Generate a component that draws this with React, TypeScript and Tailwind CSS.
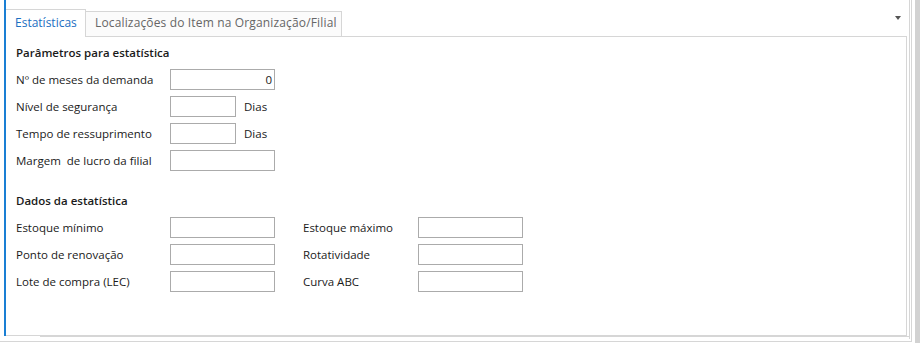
import React from "react";

const Field = ({ w = "w-[105px]", value }: { w?: string; value?: string }) => (
  <div className={`${w} h-[21px] border border-[#ababab] bg-white flex items-center justify-end pr-[2px] text-[#1a1a1a]`}>
    {value}
  </div>
);

const Row = ({ label, children }: { label: string; children: React.ReactNode }) => (
  <div className="flex items-center h-[21px]">
    <div className="w-[154px] whitespace-pre">{label}</div>
    {children}
  </div>
);

export default function App() {
  return (
    <div className="flex h-[343px] w-[920px] bg-white text-[11.5px] leading-[16px] text-[#1a1a1a] font-['Open_Sans',sans-serif] overflow-hidden">
      <div className="w-[915px] h-full">
        <div className="w-[912px] h-[342px] border-r border-b border-[#d6d6d6]">
          <div className="w-[910px] h-[339px] border-r border-[#d6d6d6] flex flex-col">
            <div className="h-[336px] flex">
              <div className="w-[4px]" />
              <div className="w-[2px] h-full bg-[#1a7fd4]" />
              <div className="w-[901px] h-full flex flex-col">
                {/* tab header */}
                <div className="h-[37px] flex items-end">
                  <div className="w-[80px] h-[28px] border-t border-r border-[#d6d6d6] bg-white pl-[9px] pt-[5px] text-[12px] text-[#1d6fc2]">
                    Estatísticas
                  </div>
                  <div className="w-[256px] h-[26px] border-t border-r border-b border-[#d6d6d6] bg-[#fbfbfb] pl-[9px] pt-[3px] text-[12px] tracking-[0.15px] text-[#666666] whitespace-nowrap">
                    Localizações do Item na Organização/Filial
                  </div>
                  <div className="flex-1 h-[37px] border-b border-[#d6d6d6] flex justify-end items-start pt-[16px] pr-[6px]">
                    <div className="w-0 h-0 border-l-[3px] border-r-[3px] border-t-[4px] border-l-transparent border-r-transparent border-t-[#555555]" />
                  </div>
                </div>
                {/* tab body */}
                <div className="flex-1 border-r border-b border-[#d6d6d6] pl-[10px] pt-[8px] flex flex-col">
                  <div className="font-semibold mb-[8px]">Parâmetros para estatística</div>
                  <div className="flex flex-col gap-[6px]">
                    <Row label="Nº de meses da demanda">
                      <Field value="0" />
                    </Row>
                    <Row label="Nível de segurança">
                      <Field w="w-[66px]" />
                      <span className="ml-[8px]">Dias</span>
                    </Row>
                    <Row label="Tempo de ressuprimento">
                      <Field w="w-[66px]" />
                      <span className="ml-[8px]">Dias</span>
                    </Row>
                    <Row label="Margem  de lucro da filial">
                      <Field />
                    </Row>
                  </div>
                  <div className="font-semibold mt-[22px] mb-[8px]">Dados da estatística</div>
                  <div className="flex flex-col gap-[6px]">
                    {[
                      ["Estoque mínimo", "Estoque máximo"],
                      ["Ponto de renovação", "Rotatividade"],
                      ["Lote de compra (LEC)", "Curva ABC"],
                    ].map(([a, b]) => (
                      <div key={a} className="flex items-center h-[21px]">
                        <div className="w-[154px]">{a}</div>
                        <Field />
                        <div className="w-[115px] ml-[28px]">{b}</div>
                        <Field />
                      </div>
                    ))}
                  </div>
                </div>
              </div>
            </div>
            <div className="h-px ml-[40px] bg-[#d6d6d6]" />
          </div>
        </div>
      </div>
      <div className="w-[5px] h-full bg-[#d2d2d2]" />
    </div>
  );
}
